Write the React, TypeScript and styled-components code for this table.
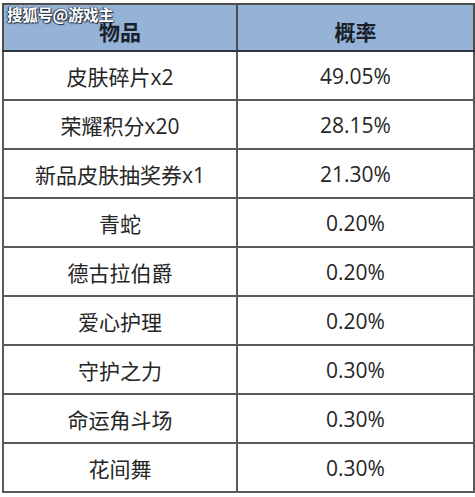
import styled, { createGlobalStyle } from "styled-components";

const rows = [
  { name: "皮肤碎片x2", rate: "49.05%" },
  { name: "荣耀积分x20", rate: "28.15%" },
  { name: "新品皮肤抽奖券x1", rate: "21.30%" },
  { name: "青蛇", rate: "0.20%" },
  { name: "德古拉伯爵", rate: "0.20%" },
  { name: "爱心护理", rate: "0.20%" },
  { name: "守护之力", rate: "0.30%" },
  { name: "命运角斗场", rate: "0.30%" },
  { name: "花间舞", rate: "0.30%" },
];

const App = () => {
  return (
    <>
      <GlobalStyle />
      <Wrap>
        <Watermark>搜狐号@游戏主</Watermark>
        <Table>
          <colgroup>
            <col style={{ width: 234 }} />
            <col style={{ width: 237 }} />
          </colgroup>
          <thead>
            <tr>
              <HeadCell>物品</HeadCell>
              <HeadCell>概率</HeadCell>
            </tr>
          </thead>
          <tbody>
            {rows.map((r) => (
              <tr key={r.name}>
                <Cell>{r.name}</Cell>
                <Cell>{r.rate}</Cell>
              </tr>
            ))}
          </tbody>
        </Table>
      </Wrap>
    </>
  );
};

export default App;

const GlobalStyle = createGlobalStyle`
  body {
    margin: 0;
    background: #ffffff;
    font-family: "Open Sans", "Noto Sans CJK SC", sans-serif;
  }
`;

const Wrap = styled.div`
  position: relative;
  width: 475px;
  height: 497px;
  padding: 3px 0 0 2px;
  box-sizing: border-box;
`;

const Watermark = styled.div`
  position: absolute;
  left: 7px;
  top: 3px;
  font-family: "Noto Sans CJK SC", sans-serif;
  font-size: 15.5px;
  font-weight: 700;
  color: #ffffff;
  letter-spacing: -0.3px;
  text-shadow: 0 0 2px #27303c, 1px 1px 1px #27303c, -1px 0 1px #27303c;
  z-index: 2;
`;

const Table = styled.table`
  border-collapse: collapse;
  table-layout: fixed;
  width: 471px;
  border: 2px solid #4e4e4e;
`;

const HeadCell = styled.th`
  height: 47px;
  padding: 7px 0 0;
  background: #95b3d7;
  color: #1a1f2a;
  font-family: "Noto Sans CJK SC", sans-serif;
  font-size: 21px;
  font-weight: 700;
  text-align: center;
  border: 2px solid #4e4e4e;
  border-bottom: 2px solid #2e3540;
  box-sizing: border-box;
`;

const Cell = styled.td`
  height: 49px;
  padding: 0;
  color: #262626;
  font-size: 21px;
  font-weight: 400;
  text-align: center;
  border: 2px solid #5a5a5a;
  box-sizing: border-box;
`;
